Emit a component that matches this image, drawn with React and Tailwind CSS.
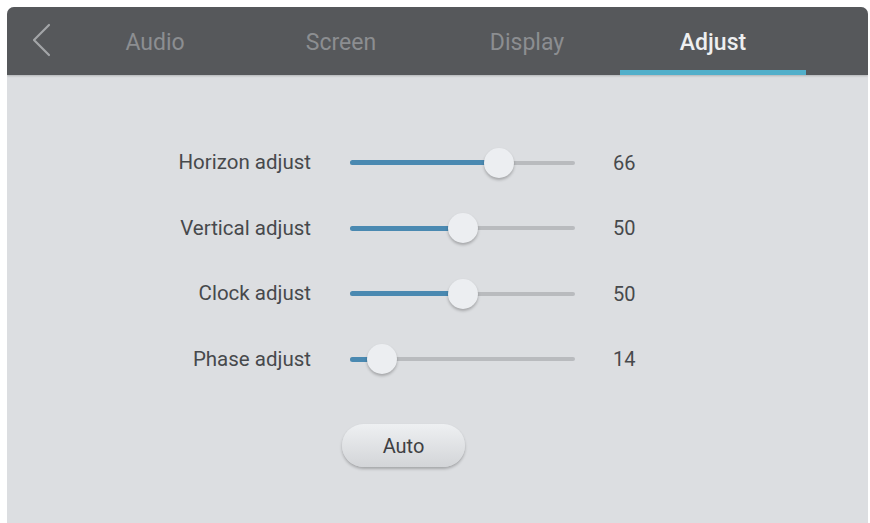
const TABS = ["Audio", "Screen", "Display", "Adjust"];

const ROWS = [
  { label: "Horizon adjust", value: 66 },
  { label: "Vertical adjust", value: 50 },
  { label: "Clock adjust", value: 50 },
  { label: "Phase adjust", value: 14 },
];

function Slider({ value }) {
  return (
    <div className="relative h-[30px] w-[225px] flex items-center">
      <div className="h-[4px] w-full rounded-full bg-[#b9bbbe]" />
      <div
        className="absolute left-0 h-[5px] rounded-full bg-[#4a89b1]"
        style={{ width: `${value}%` }}
      />
      <div
        className="absolute top-0 h-[30px] w-[30px] -ml-[15px] rounded-full bg-[#eceef1] shadow-[0_2px_3px_rgba(0,0,0,0.25)]"
        style={{ left: `${value}%` }}
      />
    </div>
  );
}

export default function App() {
  return (
    <div
      className="w-[870px] h-[523px] overflow-hidden bg-white pt-[7px] pl-[7px] pr-[2px]"
      style={{ fontFamily: "Roboto, 'Liberation Sans', sans-serif" }}
    >
      <div className="h-[540px] rounded-t-[7px] overflow-hidden bg-[#dcdee1] flex flex-col">
        <div className="h-[68px] bg-[#56585b] flex items-stretch shadow-[0_1px_2px_rgba(0,0,0,0.2)]">
          <div className="w-[55px] flex items-center justify-center">
            <svg width="20" height="34" viewBox="0 0 20 34" className="ml-[14px] mb-[2px]">
              <polyline
                points="17,2 2,17 17,32"
                fill="none"
                stroke="#a3a5a8"
                strokeWidth="2.2"
                strokeLinecap="round"
                strokeLinejoin="round"
              />
            </svg>
          </div>
          {TABS.map((tab) => {
            const active = tab === "Adjust";
            return (
              <div
                key={tab}
                className="w-[186px] flex flex-col items-center justify-end"
              >
                <span
                  className={`text-[23px] leading-none mb-[16px] ${
                    active ? "text-[#eeeff0] font-medium" : "text-[#8c8e91]"
                  }`}
                >
                  {tab}
                </span>
                <div
                  className={`h-[5px] w-full ${active ? "bg-[#52afca]" : "bg-transparent"}`}
                />
              </div>
            );
          })}
        </div>

        <div className="pt-[55px] flex flex-col">
          {ROWS.map((row) => (
            <div key={row.label} className="h-[65.5px] flex items-center">
              <div className="w-[304px] text-right text-[20.5px] text-[#47494c]">
                {row.label}
              </div>
              <div className="ml-[39px]">
                <Slider value={row.value} />
              </div>
              <div className="ml-[38px] text-[20px] text-[#47494c]">{row.value}</div>
            </div>
          ))}
          <div className="mt-[32px] pl-[335px]">
            <button
              type="button"
              className="w-[123px] h-[43px] rounded-full bg-gradient-to-b from-[#eef0f2] to-[#d3d5d8] shadow-[0_2px_3px_rgba(0,0,0,0.25)] text-[20px] text-[#3e4043]"
            >
              Auto
            </button>
          </div>
        </div>
      </div>
    </div>
  );
}
